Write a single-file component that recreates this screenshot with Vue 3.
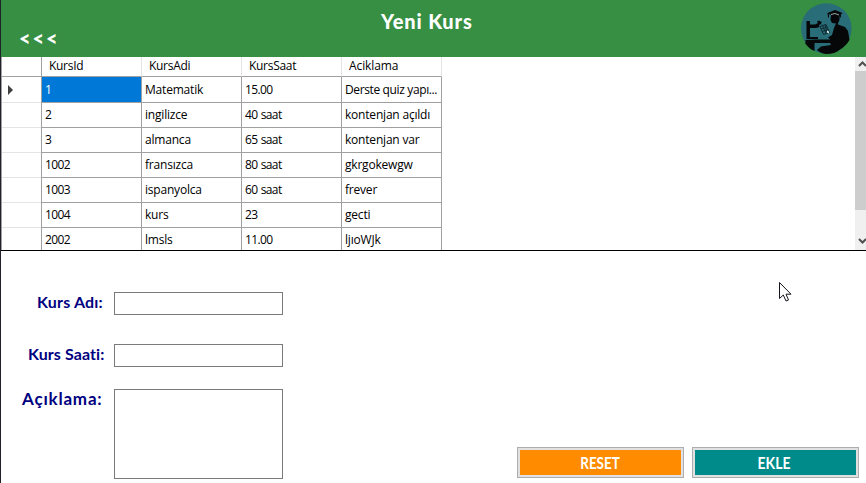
<script setup>
import { ref } from 'vue'

const columns = ['KursId', 'KursAdi', 'KursSaat', 'Aciklama']
const rows = [
  ['1', 'Matematik', '15.00', 'Derste quiz yapı...'],
  ['2', 'ingilizce', '40 saat', 'kontenjan açıldı'],
  ['3', 'almanca', '65 saat', 'kontenjan var'],
  ['1002', 'fransızca', '80 saat', 'gkrgokewgw'],
  ['1003', 'ispanyolca', '60 saat', 'frever'],
  ['1004', 'kurs', '23', 'gecti'],
  ['2002', 'lmsls', '11.00', 'ljıoWJk'],
]
const name = ref('')
const hours = ref('')
const note = ref('')
</script>

<template>
  <div class="window">
    <header class="header">
      <a class="back">&lt;&lt;&lt;</a>
      <h1 class="title">Yeni Kurs</h1>
      <svg class="logo" viewBox="0 0 52 52">
        <circle cx="25.3" cy="25.5" r="25.3" fill="#286d78" />
        <g fill="#050708">
          <path d="M26.500 10 34 7 41.500 10 40 11.500V15L38.500 13Q39 18 37 20V21.500L44 24 47 28 48.500 37Q45 43 39 46.500Q34 51 25 51Q19 50 16 47L20 43.500 30 42 29 40H4.500V37L14 36.500H29L27 34.500 31 32 33 25 35 20.500 31 20 29.500 17 30 12 28 11V15L27 14Z" />
          <path d="M5.500 18H9V21.500H14L17 20 16 18.500 18 17.500 20 19 21 18 20 21 18 22 18.500 24 15 25H9V34H17V36H5.500z" />
          <path d="M4 40H13.500V48Q7 45 4 40z" />
        </g>
        <path d="m19 23.500 6-2 3.500 8-6 2zM20 26l6-2m-5 4.500 6-2m-6-5 4 9m-1-9 2 8" stroke="#102a31" fill="none" />
        <path d="m26 27.500 2 1v2l-2-1z" fill="#d5e3e3" />
        <path d="M30 11.500 34 10.500 38 12" stroke="#9ba9aa" fill="none" />
      </svg>
    </header>

    <section class="grid-panel">
      <div class="grid">
        <div class="row head">
          <div class="marker"></div>
          <div v-for="c in columns" :key="c" class="cell">{{ c }}</div>
        </div>
        <div v-for="(r, i) in rows" :key="r[0]" class="row">
          <div class="marker">
            <svg v-if="i === 0" width="5" height="10" viewBox="0 0 5 10"><path d="M0 0 5 5 0 10z" fill="#404040" /></svg>
          </div>
          <div v-for="(v, j) in r" :key="j" class="cell" :class="{ selected: i === 0 && j === 0, number: j === 0 || j === 2, long: v.length > 16 }">{{ v }}</div>
        </div>
      </div>
      <div class="scrollbar">
        <svg class="arrow" viewBox="0 0 11 14"><path d="M4 9 7.5 5.5 11 9" /></svg>
        <div class="thumb"></div>
        <svg class="arrow down" viewBox="0 0 11 14"><path d="M4 5 7.5 8.5 11 5" /></svg>
      </div>
    </section>

    <main class="form">
      <div class="fields">
        <div class="field"><label class="l-name" for="name">Kurs Adı:</label><input id="name" v-model="name" /></div>
        <div class="field"><label class="l-hours" for="hours">Kurs Saati:</label><input id="hours" v-model="hours" /></div>
        <div class="field note"><label class="l-note" for="note">Açıklama:</label><textarea id="note" v-model="note"></textarea></div>
      </div>
      <div class="actions">
        <button class="reset"><span>RESET</span></button>
        <button class="add"><span>EKLE</span></button>
      </div>
    </main>

    <svg class="pointer" width="13" height="21" viewBox="0 0 13 21">
      <path d="M.5.5V16.5L4.3 13 7 19 9.5 18 7 12.2H12Z" fill="#fff" stroke="#15151f" />
    </svg>
  </div>
</template>

<style>
body { overflow: hidden; background: #fff; }
</style>

<style scoped>
.window {
  position: relative;
  box-sizing: border-box;
  width: 866px;
  height: 483px;
  display: flex;
  flex-direction: column;
  border-left: 1px solid #20222a;
  background: #fff;
  overflow: hidden;
}
.header {
  flex: none;
  height: 57px;
  display: grid;
  grid-template-columns: 340px 1fr 65px;
  background: #368f43;
  color: #fff;
}
.back {
  margin: 27px 0 0 18px;
  font: 900 20px/22px Lato, sans-serif;
  letter-spacing: 1.9px;
}
.title {
  margin: 9px 0 0 40px;
  font: 900 20px/25px Lato, sans-serif;
  letter-spacing: 0.85px;
}
.logo { width: 52px; height: 52px; margin-top: 3px; }

.grid-panel {
  flex: none;
  height: 193px;
  display: flex;
  justify-content: space-between;
  border-bottom: 1px solid #000;
  overflow: hidden;
}
.grid { border-left: 1px solid #a0a0a0; }
.row {
  display: grid;
  grid-template-columns: 40px repeat(4, 100px);
  height: 25px;
  box-sizing: border-box;
}
.marker {
  box-sizing: border-box;
  border-right: 1px solid #a0a0a0;
  border-bottom: 1px solid #e4e4e4;
  display: flex;
  align-items: center;
  padding-left: 6px;
}
.cell {
  box-sizing: border-box;
  border-right: 1px solid #a0a0a0;
  border-bottom: 1px solid #a0a0a0;
  padding-left: 3px;
  font: 12px/25px "Open Sans", sans-serif;
  letter-spacing: -0.2px;
  white-space: nowrap;
  color: #000;
}
.number { letter-spacing: -0.6px; word-spacing: 0.6px; }
.long { letter-spacing: -0.37px; }
.head { height: 20px; }
.head .marker { border-bottom-color: #a0a0a0; }
.head .cell { line-height: 18px; padding-left: 7px; border-right-color: #e4e4e4; letter-spacing: -0.3px; }
.head .cell:last-child { letter-spacing: -0.1px; }
.selected { background: #0078d7; color: #fff; }
.scrollbar {
  width: 11px;
  display: flex;
  flex-direction: column;
  background: #f0f0f0;
}
.arrow { flex: none; width: 11px; height: 14px; fill: none; stroke: #505050; stroke-width: 2; }
.thumb { height: 139px; background: #cdcdcd; }
.down { margin-top: 24px; }

.form { flex: 1; display: flex; justify-content: space-between; }
.fields { padding-top: 41px; display: flex; flex-direction: column; }
.field { display: grid; grid-template-columns: 113px 169px; height: 23px; margin-bottom: 29px; }
.field.note { height: 90px; margin: -7px 0 0; }
label {
  font: 700 16px/19px Lato, sans-serif;
  font-variant-ligatures: none;
  color: #000080;
  white-space: nowrap;
}
.l-name { padding-left: 36px; letter-spacing: 0.2px; }
.l-hours { padding-left: 27px; letter-spacing: 0.1px; }
.l-note { padding-left: 21px; line-height: 19px; font-size: 17px; letter-spacing: 0.8px; }
input, textarea {
  box-sizing: border-box;
  width: 169px;
  height: 100%;
  margin: 0;
  padding: 2px;
  border: 1px solid #7a7a7a;
  border-radius: 0;
  background: #fff;
  resize: none;
  outline: none;
}
.actions { align-self: flex-end; display: flex; gap: 8px; padding: 0 7px 5px 0; }
button {
  box-sizing: border-box;
  width: 167px;
  height: 31px;
  padding: 0;
  border: 1px solid #adadad;
  border-radius: 0;
  box-shadow: inset 0 0 0 2px #e1e1e1;
  color: #fff;
  font: 700 17px/28px Lato, sans-serif;
}
button span { display: inline-block; transform: scaleX(0.79); }
.add { padding-right: 2px; background: #008b8b; }
.add span { transform: scaleX(0.82); }
.reset { background: #ff8c00; }
.pointer { position: absolute; left: 778px; top: 282px; }
</style>
